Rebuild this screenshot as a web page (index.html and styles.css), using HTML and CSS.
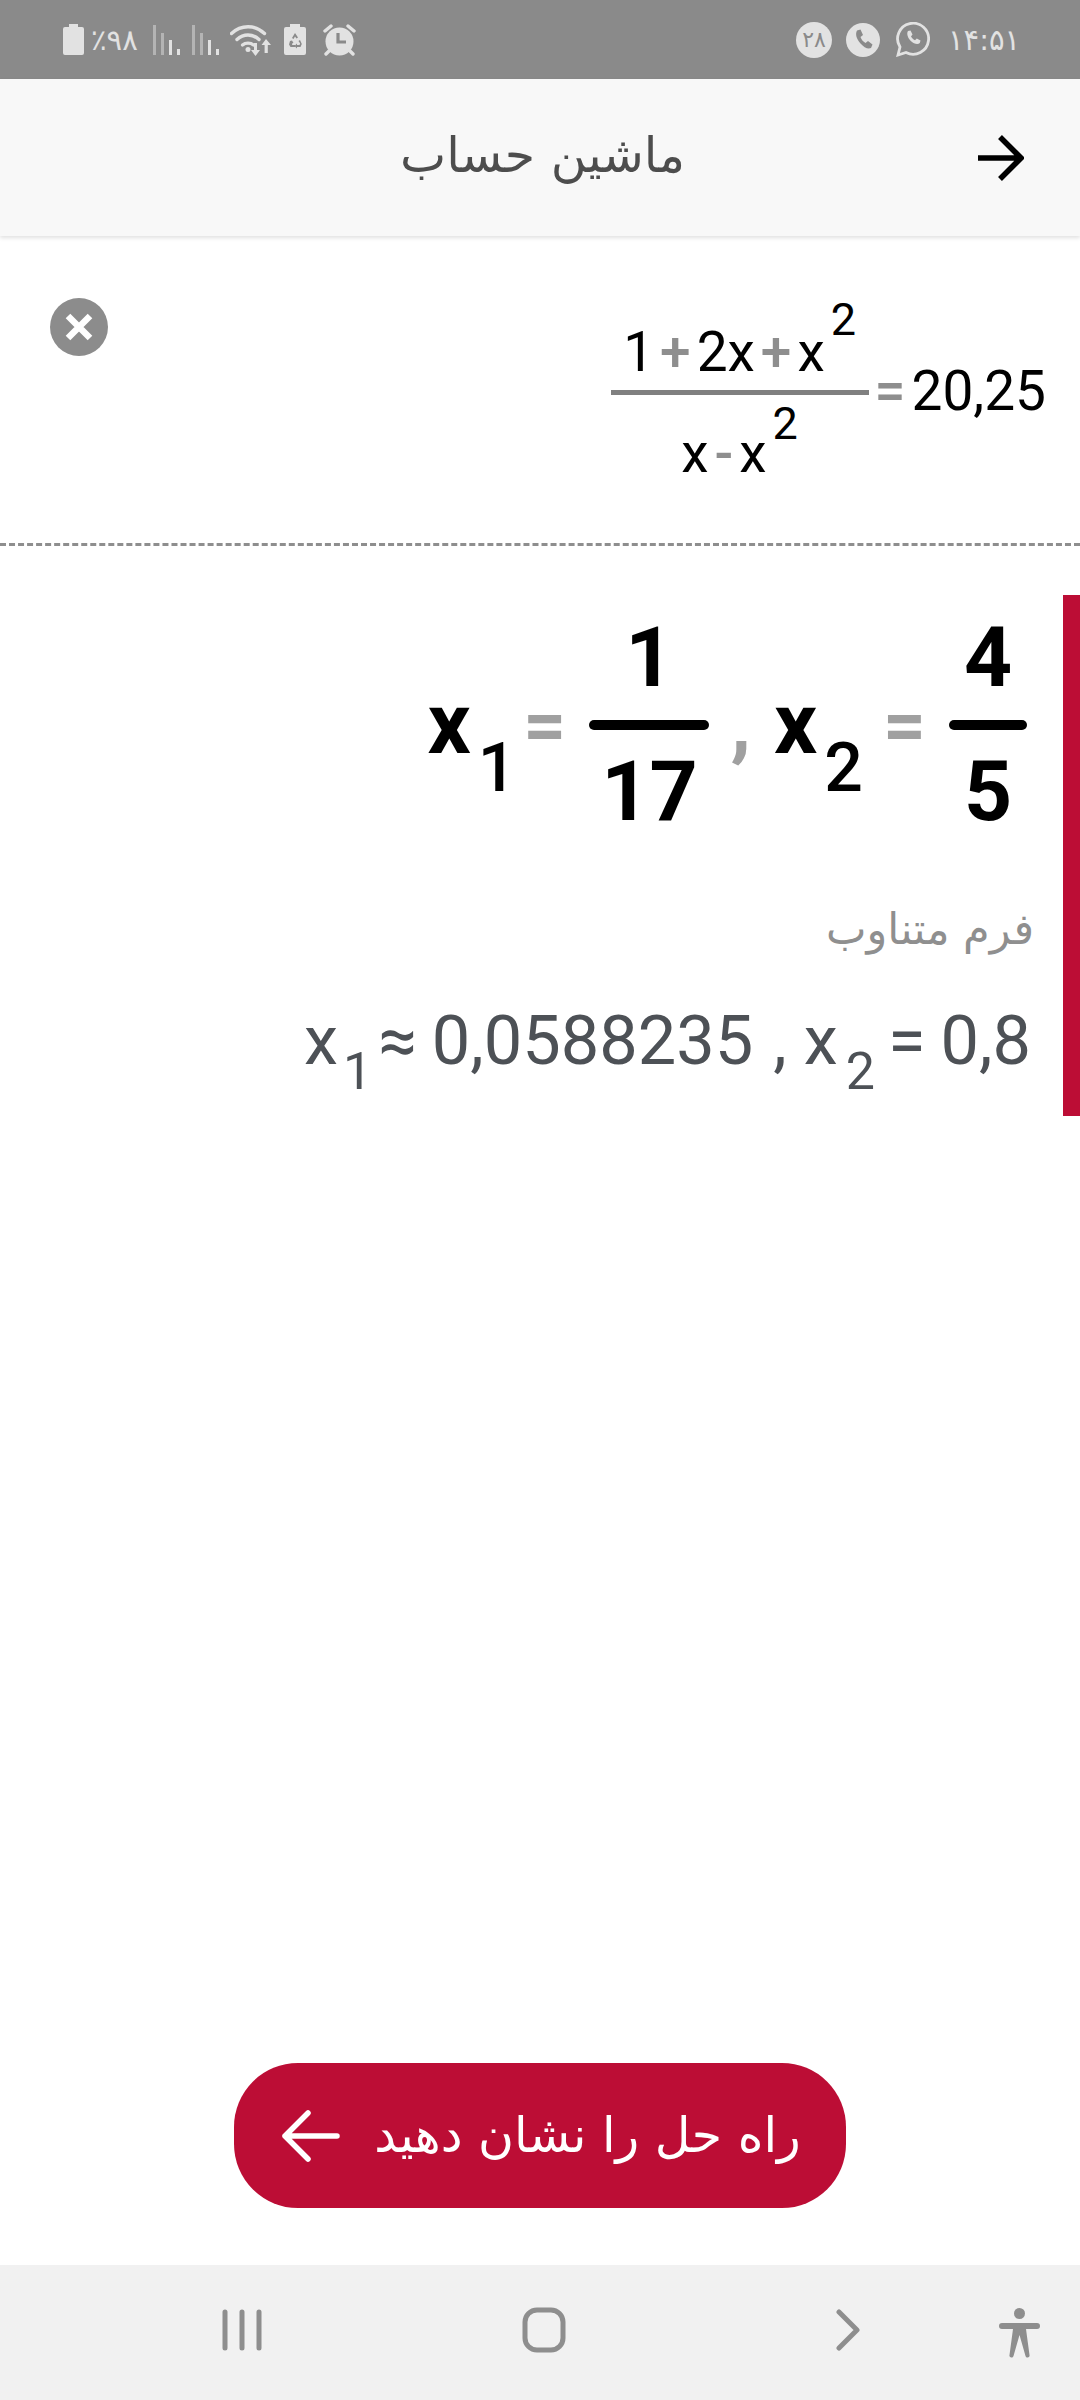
FILE: index.html
```html
<!DOCTYPE html>
<html lang="fa">
<head>
    <meta charset="UTF-8">
    <meta name="viewport" content="width=device-width, initial-scale=1.0">
    <title>ماشین حساب</title>
    <link rel="stylesheet" href="styles.css">
</head>
<body>

    <!-- Status bar -->
    <div class="status-bar">
        <div class="status-left">
            <svg class="ic-battery" width="21" height="31" viewBox="0 0 21 31"><path fill="#e2e2e2" d="M6 0h9v3h4a2 2 0 0 1 2 2v24a2 2 0 0 1-2 2H2a2 2 0 0 1-2-2V5a2 2 0 0 1 2-2h4z"/></svg>
            <span class="status-text pct">٪۹۸</span>
            <svg class="ic-signal" width="27" height="30" viewBox="0 0 27 30"><rect x="0" y="0" width="3" height="30" fill="#b4b4b4"/><rect x="8" y="8" width="3" height="22" fill="#b4b4b4"/><rect x="16" y="15" width="3" height="15" fill="#e2e2e2"/><rect x="24" y="24" width="3" height="6" fill="#e2e2e2"/></svg>
            <svg class="ic-signal" width="27" height="30" viewBox="0 0 27 30"><rect x="0" y="0" width="3" height="30" fill="#b4b4b4"/><rect x="8" y="8" width="3" height="22" fill="#b4b4b4"/><rect x="16" y="15" width="3" height="15" fill="#e2e2e2"/><rect x="24" y="24" width="3" height="6" fill="#e2e2e2"/></svg>
            <svg class="ic-wifi" width="42" height="32" viewBox="0 0 42 32"><g fill="none" stroke="#e2e2e2" stroke-width="3.4" stroke-linecap="round"><path d="M1.5 9.5C11 .5 25 .5 34.5 9.5"/><path d="M7 15.500C13.500 9.500 22.500 9.500 29 15.500"/><path d="M12.500 21C15.500 18.500 20.500 18.500 23.500 21"/></g><circle cx="18" cy="25.500" r="2.500" fill="#e2e2e2"/><path fill="#e2e2e2" d="M24 19h3v7h3l-4.500 6-4.500-6h3zM36 15l5 6h-3.200v8h-3.200v-8H31.500z"/></svg>
            <svg class="ic-saver" width="22" height="31" viewBox="0 0 22 31"><path fill="#e2e2e2" d="M6 0h10v3h4a2 2 0 0 1 2 2v24a2 2 0 0 1-2 2H2a2 2 0 0 1-2-2V5a2 2 0 0 1 2-2h4z"/><path fill="#8a8a8a" d="M11 9l3 4.500-1.500 1-1.500-2-1.500 2.500L8 14zM6 17l2-.5 1.500 2.500h-1l-.5 2h3v2H6.500L5 20.500zM16 16l1.800 4-1.300 3H13v1.500L10.500 22 13 19.500V21h2.500l.7-1.500L14.500 17z"/></svg>
            <svg class="ic-alarm" width="33" height="32" viewBox="0 0 33 32"><circle cx="16.500" cy="17.500" r="14" fill="#e2e2e2"/><g stroke="#e2e2e2" stroke-width="3.400" stroke-linecap="round"><path d="M2 7l6-5M31 7l-6-5M6 27l-3 3M27 27l3 3"/></g><path fill="none" stroke="#8a8a8a" stroke-width="3.200" d="M15 9v9h8"/></svg>
        </div>
        <div class="status-right">
            <span class="badge">۲۸</span>
            <svg class="ic-call" width="34" height="34" viewBox="0 0 34 34"><circle cx="17" cy="17" r="17" fill="#e2e2e2"/><path fill="#8a8a8a" d="M11 7.500l3.500-1 2.500 5.500-2.500 2c.8 2.500 2.500 4.500 5 6l2.500-2 4.500 3.500-1.500 3.500c-3 1.500-7-.5-10.500-4.500C10.500 16 9 11 11 7.500z"/></svg>
            <svg class="ic-whatsapp" width="34" height="35" viewBox="0 0 34 35"><path fill="none" stroke="#e2e2e2" stroke-width="2.800" d="M2 33l2-8A15.500 15.500 0 1 1 10 30.500z"/><path fill="#e2e2e2" d="M12 9l2.500-.5 2 4-1.500 2c.8 1.500 2 2.700 4 3.700l1.800-1.700 3.700 2-.7 2.500c-2 2-6 .8-9-2-3-3-4.500-7.500-2.800-10z"/></svg>
            <span class="status-text time">۱۴:۵۱</span>
        </div>
    </div>

    <!-- Header -->
    <div class="header">
        <h1 class="title">ماشین حساب</h1>
        <svg class="back-arrow" width="46" height="46" viewBox="0 0 46 46"><path fill="none" stroke="#000" stroke-width="5.500" d="M0 23h42M22 2l21 21-21 21"/></svg>
    </div>

    <div class="content">
        <!-- Input expression -->
        <div class="input-row">
            <svg class="clear-btn" width="58" height="58" viewBox="0 0 58 58"><circle cx="29" cy="29" r="29" fill="#8c8c8c"/><path stroke="#fff" stroke-width="6.500" d="M18 18l22 22M40 18L18 40"/></svg>
            <div class="formula">
                <div class="in-frac">
                    <div class="in-num">1<span class="in-op">+</span>2x<span class="in-op">+</span>x<span class="in-sup">2</span></div>
                    <div class="in-bar"></div>
                    <div class="in-den">x<span class="in-op">-</span>x<span class="in-sup in-sup-low">2</span></div>
                </div>
                <span class="in-eq">=</span>
                <span class="in-value">20,25</span>
            </div>
        </div>

        <!-- Result -->
        <div class="result">
            <div class="exact">
                <span class="var">x</span><span class="sub">1</span>
                <span class="eq eq-first">=</span>
                <div class="frac frac-wide">
                    <div class="frac-num">1</div>
                    <div class="frac-bar"></div>
                    <div class="frac-den">17</div>
                </div>
                <span class="comma">,</span>
                <span class="var">x</span><span class="sub">2</span>
                <span class="eq">=</span>
                <div class="frac frac-narrow">
                    <div class="frac-num">4</div>
                    <div class="frac-bar"></div>
                    <div class="frac-den">5</div>
                </div>
            </div>
            <div class="alt-label">فرم متناوب</div>
            <div class="decimal">
                <span>x</span><span class="dec-sub dec-sub-first">1</span><span class="dec-approx">≈</span><span>0,0588235</span><span class="dec-comma">,</span><span>x</span><span class="dec-sub">2</span><span class="dec-eq">=</span><span>0,8</span>
            </div>
        </div>

        <!-- Show solution -->
        <button class="solve-btn">
            <svg width="58" height="52" viewBox="0 0 58 52"><path fill="none" stroke="#fff" stroke-width="5.500" stroke-linecap="round" stroke-linejoin="round" d="M55 26H3M26 3L3 26l23 23"/></svg>
            <span class="solve-text">راه حل را نشان دهید</span>
        </button>
    </div>

    <!-- Navigation bar -->
    <div class="nav-bar">
        <svg class="nav-recent" width="44" height="42" viewBox="0 0 44 42"><g stroke="#8e8e8e" stroke-width="5" stroke-linecap="round"><path d="M5 3v36M22 3v36M39 3v36"/></g></svg>
        <svg class="nav-home" width="44" height="46" viewBox="0 0 44 46"><rect x="3" y="3" width="38" height="40" rx="12" fill="none" stroke="#8e8e8e" stroke-width="5"/></svg>
        <svg class="nav-back" width="24" height="42" viewBox="0 0 24 42"><path fill="none" stroke="#8e8e8e" stroke-width="5" stroke-linecap="round" stroke-linejoin="round" d="M3 3l18 18L3 39"/></svg>
        <svg class="nav-access" width="41" height="50" viewBox="0 0 41 50"><ellipse cx="20.500" cy="5.500" rx="5.500" ry="5.500" fill="#8e8e8e"/><path fill="#8e8e8e" d="M3 15h35a2.500 2.500 0 0 1 0 6h-11l3.500 26a2 2 0 0 1-4 1l-6-21-6 21a2 2 0 0 1-4-1l3.500-26H3a2.500 2.500 0 0 1 0-6z"/></svg>
    </div>

</body>
</html>
```

FILE: styles.css
```css
* {
    box-sizing: border-box;
}

html, body {
    height: 100%;
}

body {
    margin: 0;
    background-color: #fff;
    font-family: Roboto, sans-serif;
    display: flex;
    flex-direction: column;
    overflow: hidden;
}

/* status bar */
.status-bar {
    height: 79px;
    flex-shrink: 0;
    background-color: #8a8a8a;
    display: flex;
    justify-content: space-between;
    align-items: center;
    padding: 0 65px 0 63px;
}

.status-left,
.status-right {
    display: flex;
    align-items: center;
    direction: ltr;
}

.status-text {
    font-family: "DejaVu Sans", sans-serif;
    font-size: 29px;
    color: #e2e2e2;
}

.pct {
    margin-left: 7px;
    width: 50px;
    white-space: nowrap;
}

.ic-signal {
    margin-left: 12px;
}

.ic-wifi {
    margin-left: 11px;
}

.ic-saver {
    margin-left: 12px;
}

.ic-alarm {
    margin-left: 17px;
}

.badge {
    width: 36px;
    height: 36px;
    border-radius: 50%;
    background-color: #e2e2e2;
    color: #8a8a8a;
    font-family: "DejaVu Sans", sans-serif;
    font-size: 22px;
    display: flex;
    justify-content: center;
    align-items: center;
}

.ic-call {
    margin-left: 14px;
}

.ic-whatsapp {
    margin-left: 16px;
}

.time {
    margin-left: 18px;
    width: 67px;
    white-space: nowrap;
}

/* header */
.header {
    height: 157px;
    flex-shrink: 0;
    background-color: #f8f8f8;
    box-shadow: 0 2px 4px rgba(0,0,0,0.12);
    display: flex;
    align-items: center;
    justify-content: space-between;
    padding: 0 56px 0 400px;
}

.title {
    margin: 0 0 5px;
    font-family: "DejaVu Sans", sans-serif;
    font-weight: normal;
    font-size: 49px;
    color: #4d4d4d;
}

/* content */
.content {
    flex: 1;
    display: flex;
    flex-direction: column;
}

.input-row {
    height: 310px;
    border-bottom: 3px dashed #8e8e8e;
    display: flex;
    justify-content: space-between;
    padding: 60px 34px 0 50px;
}

.clear-btn {
    margin-top: 2px;
}

.formula {
    display: flex;
    align-items: center;
    height: 190px;
    color: #000;
}

.in-frac {
    display: flex;
    flex-direction: column;
    align-items: center;
    width: 258px;
    padding-top: 19px;
    font-size: 55px;
}

.in-num,
.in-den {
    line-height: 55px;
    white-space: nowrap;
}

.in-den {
    margin-top: 29px;
}

.in-op {
    color: #8e8e8e;
    font-weight: 500;
    margin: 0 6px;
}

.in-sup {
    font-size: 45px;
    vertical-align: 36px;
    line-height: 0;
    margin-left: 6px;
}

.in-sup-low {
    vertical-align: 33px;
}

.in-bar {
    width: 100%;
    height: 5px;
    background-color: #808080;
    margin: 10px 0 0;
}

.in-eq {
    font-size: 55px;
    font-weight: 500;
    color: #8e8e8e;
    margin: 0 6px;
}

.in-value {
    font-size: 55px;
}

/* result */
.result {
    margin-top: 49px;
    height: 521px;
    border-right: 17px solid #bc0d35;
    display: flex;
    flex-direction: column;
    align-items: flex-end;
    padding-right: 36px;
}

.exact {
    display: flex;
    align-items: center;
    height: 230px;
    margin-top: 15px;
    font-weight: 700;
    color: #000;
}

.var {
    font-size: 85px;
    line-height: 1;
    margin-bottom: 2px;
}

.sub {
    font-size: 68px;
    font-weight: 500;
    line-height: 1;
    margin: 86px 0 0 7px;
}

.eq {
    font-size: 75px;
    color: #a0a0a0;
    font-weight: 700;
    margin: 0 23px 0 20px;
    line-height: 1;
}

.eq-first {
    margin-left: 7px;
}

.comma {
    font-size: 84px;
    color: #a0a0a0;
    line-height: 1;
    margin: -4px 23px 0 21px;
}

.frac {
    display: flex;
    flex-direction: column;
    align-items: center;
    font-size: 84px;
    line-height: 100px;
}

.frac-wide {
    width: 120px;
}

.frac-narrow {
    width: 78px;
}

.frac-bar {
    width: 100%;
    height: 10px;
    border-radius: 5px;
    background-color: #000;
    margin: 12px 0;
}

.alt-label {
    margin: 64px -7px 0 0;
    font-family: "DejaVu Sans", sans-serif;
    font-size: 43px;
    color: #8f8f8f;
    direction: rtl;
}

.decimal {
    display: flex;
    align-items: flex-start;
    margin: 47px -4px 0 0;
    font-size: 68.500px;
    line-height: 80px;
    color: #4d5156;
}

.dec-sub {
    font-size: 52px;
    margin: 31px 0 0 8px;
}

.dec-sub-first {
    margin-left: 5px;
}

.dec-approx {
    margin: 0 15px 0 6px;
}

.dec-eq {
    margin: 0 15px 0 13px;
}

.dec-comma {
    margin: 0 17px 0 20px;
}

/* solve button */
.solve-btn {
    margin: auto auto 57px;
    width: 612px;
    height: 145px;
    flex-shrink: 0;
    border: none;
    border-radius: 64px;
    background-color: #bc0d35;
    display: flex;
    align-items: center;
    justify-content: center;
    gap: 34px;
    padding: 0 0 0 3px;
}

.solve-text {
    font-family: "DejaVu Sans", sans-serif;
    font-size: 49px;
    color: #fff;
    direction: rtl;
}

/* nav bar */
.nav-bar {
    height: 135px;
    flex-shrink: 0;
    background-color: #f1f1f1;
    display: flex;
    align-items: center;
    padding: 0 0 5px 220px;
}

.nav-home {
    margin-left: 258px;
}

.nav-back {
    margin-left: 270px;
}

.nav-access {
    margin-left: 139px;
    margin-top: 6px;
}
```
